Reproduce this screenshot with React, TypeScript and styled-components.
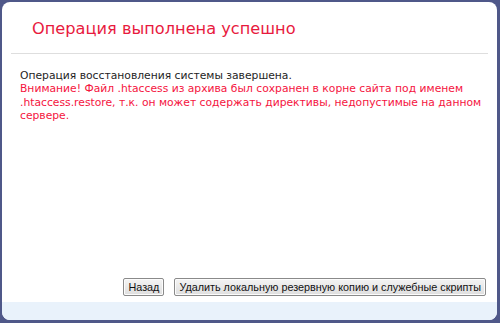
import React from "react";
import styled, { createGlobalStyle } from "styled-components";

const Global = createGlobalStyle`
  html, body {
    margin: 0;
    padding: 0;
    width: 500px;
    height: 323px;
    background: #4f5889;
    overflow: hidden;
  }
`;

const Frame = styled.div`
  display: flex;
  flex-direction: column;
  margin: 2px 3px 3px 2px;
  height: 318px;
  background: #ffffff;
  border-radius: 8px;
  overflow: hidden;
`;

const Header = styled.div`
  padding: 17px 0 0 30px;
  height: 33px;
  box-sizing: border-box;
  color: #e81a3e;
  font-family: "DejaVu Sans", Verdana, sans-serif;
  font-size: 16.2px;
`;

const Divider = styled.div`
  height: 1px;
  margin: 18px 9px 0 9px;
  background: #dedede;
`;

const Content = styled.div`
  flex: 1;
  padding: 15px 8px 0 18px;
  font-family: "DejaVu Sans", Verdana, sans-serif;
  font-size: 10.75px;
  line-height: 13.3px;
  color: #1e1e1e;
`;

const Warning = styled.div`
  color: #f5143e;
`;

const Footer = styled.div`
  display: flex;
  justify-content: flex-end;
  gap: 10px;
  padding: 0 11px 6px 0;
`;

const Button = styled.button`
  height: 18px;
  padding: 0 4px;
  font-family: "Liberation Sans", Arial, sans-serif;
  font-size: 10.8px;
  color: #111;
  background: linear-gradient(#f4f4f4, #dedede);
  border: 1px solid #8a8a8a;
  border-radius: 2px;
  box-shadow: inset 0 0 0 1px #fcfcfc;
`;

const Strip = styled.div`
  height: 18px;
  background: #e9f2fb;
`;

export default function App() {
  return (
    <>
      <Global />
      <Frame>
        <Header>Операция выполнена успешно</Header>
        <Divider />
        <Content>
          <div>Операция восстановления системы завершена.</div>
          <Warning>
            Внимание! Файл .htaccess из архива был сохранен в корне сайта под именем
            .htaccess.restore, т.к. он может содержать директивы, недопустимые на данном
            сервере.
          </Warning>
        </Content>
        <Footer>
          <Button>Назад</Button>
          <Button>Удалить локальную резервную копию и служебные скрипты</Button>
        </Footer>
        <Strip />
      </Frame>
    </>
  );
}
